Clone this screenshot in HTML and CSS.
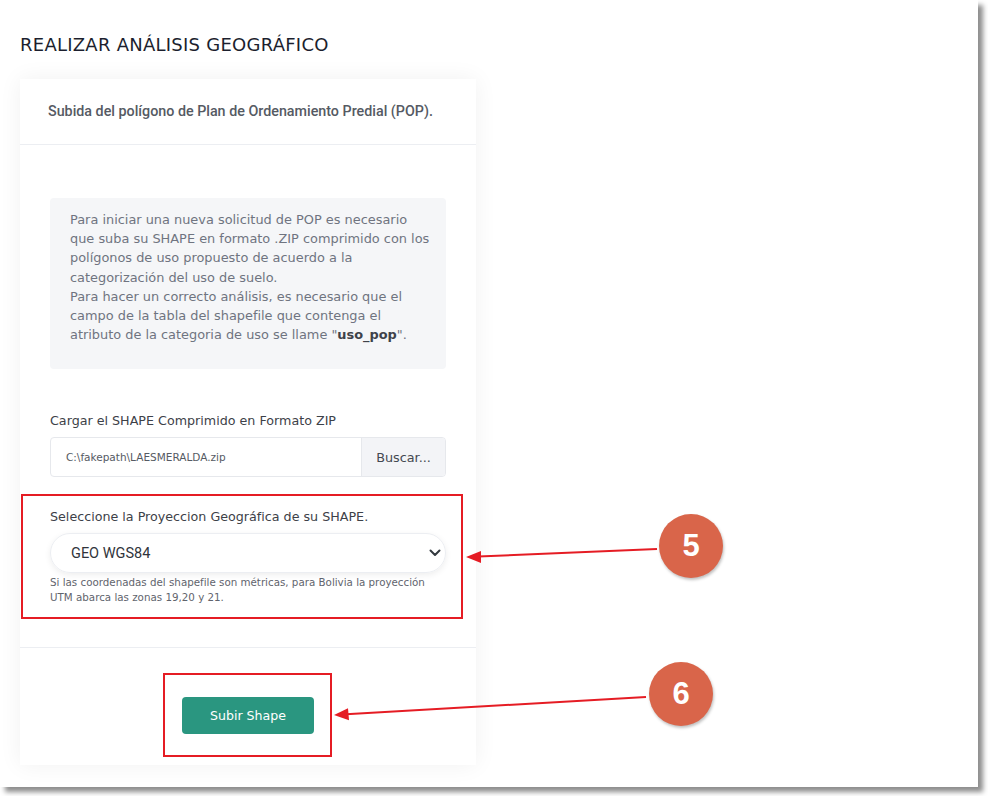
FILE: index.html
```html
<!DOCTYPE html>
<html lang="es">
  <head>
    <meta charset="UTF-8" />
    <meta name="viewport" content="width=device-width, initial-scale=1.0" />
    <title>Realizar análisis geográfico</title>
    <link rel="stylesheet" href="styles.css">
  </head>
  <body>
    <div class="sheet">
      <h2 class="pageTitle">REALIZAR ANÁLISIS GEOGRÁFICO</h2>

      <div class="card">
        <div class="cardHead">Subida del polígono de Plan de Ordenamiento Predial (POP).</div>

        <div class="cardBody">
          <div class="note">
            Para iniciar una nueva solicitud de POP es necesario<br>
            que suba su SHAPE en formato .ZIP comprimido con los<br>
            polígonos de uso propuesto de acuerdo a la<br>
            categorización del uso de suelo.<br>
            Para hacer un correcto análisis, es necesario que el<br>
            campo de la tabla del shapefile que contenga el<br>
            atributo de la categoria de uso se llame "<b>uso_pop</b>".
          </div>

          <div class="field fileField">
            <label class="fieldLabel">Cargar el SHAPE Comprimido en Formato ZIP</label>
            <div class="fileGroup">
              <span class="fileName">C:\fakepath\LAESMERALDA.zip</span>
              <span class="fileBtn">Buscar...</span>
            </div>
          </div>

          <div class="field selectField">
            <label class="fieldLabel">Seleccione la Proyeccion Geográfica de su SHAPE.</label>
            <div class="selectBox">
              <span>GEO WGS84</span>
              <svg width="12" height="8" viewBox="0 0 12 8"><path d="M1.5 1.5 L6 6 L10.5 1.5" fill="none" stroke="#343a40" stroke-width="2" stroke-linecap="round" stroke-linejoin="round"/></svg>
            </div>
            <small class="help">Si las coordenadas del shapefile son métricas, para Bolivia la proyección<br>UTM abarca las zonas 19,20 y 21.</small>
          </div>
        </div>

        <div class="cardFoot">
          <button class="btnSubmit">Subir Shape</button>
        </div>
      </div>

      <!-- annotation layer -->
      <div class="mark markSelect"></div>
      <div class="mark markButton"></div>
      <svg class="arrows" width="978" height="787">
        <line x1="657" y1="549" x2="478" y2="556.5" stroke="#e51c24" stroke-width="2"/>
        <polygon points="466,557 481,551 481,563" fill="#e51c24"/>
        <line x1="646" y1="697" x2="346" y2="714.3" stroke="#e51c24" stroke-width="2"/>
        <polygon points="334,715 348,708.3 349,720.3" fill="#e51c24"/>
      </svg>
      <div class="step step5">5</div>
      <div class="step step6">6</div>
    </div>
  </body>
</html>
```

FILE: styles.css
```css
* {
  margin: 0;
  padding: 0;
  box-sizing: border-box;
}
body {
  background: #fff;
  min-height: 796px;
  font-family: "DejaVu Sans", sans-serif;
}
.sheet {
  position: relative;
  width: 978px;
  height: 787px;
  background: #fff;
  padding: 34px 0 0 20px;
  box-shadow: 5px 5px 5px rgba(0, 0, 0, 0.45);
}
.pageTitle {
  font-family: "DejaVu Sans", sans-serif;
  font-weight: 400;
  font-size: 18px;
  line-height: 22px;
  color: #1c1f2e;
  letter-spacing: 0.25px;
  margin-bottom: 23px;
}
.card {
  width: 456px;
  height: 686px;
  background: #fff;
  box-shadow: 0 0 22px rgba(0, 0, 0, 0.06);
  display: flex;
  flex-direction: column;
}
.cardHead {
  font-family: Roboto, sans-serif;
  font-weight: 500;
  font-size: 14.3px;
  line-height: 21px;
  color: #555a63;
  padding: 22px 28px;
  border-bottom: 1px solid #eceef2;
}
.cardBody {
  padding: 53px 30px 0;
  flex: 0 0 503px;
  border-bottom: 1px solid #eceef2;
}
.note {
  background: #f5f6f8;
  border-radius: 4px;
  height: 171px;
  padding: 12px 10px 0 20px;
  font-size: 12.9px;
  line-height: 19.2px;
  color: #6f7480;
  white-space: nowrap;
}
.note b {
  color: #3e424a;
  font-weight: 600;
}
.field {
  display: flex;
  flex-direction: column;
}
.fieldLabel {
  font-size: 12.7px;
  line-height: 20px;
  color: #3d4148;
}
.fileField {
  margin-top: 42px;
  gap: 6px;
}
.fileGroup {
  display: flex;
  height: 40px;
  border: 1px solid #e6e8ec;
  border-radius: 4px;
  overflow: hidden;
}
.fileName {
  flex: 1;
  display: flex;
  align-items: center;
  padding-left: 15px;
  font-size: 10.5px;
  color: #555a63;
}
.fileBtn {
  width: 84px;
  display: flex;
  align-items: center;
  justify-content: center;
  background: #f3f4f7;
  border-left: 1px solid #e6e8ec;
  font-size: 12.8px;
  color: #444851;
}
.selectField {
  margin-top: 30px;
}
.selectBox {
  margin-top: 6px;
  height: 40px;
  border: 1px solid #eceef2;
  border-radius: 20px;
  box-shadow: 0 2px 6px rgba(0, 0, 0, 0.07);
  display: flex;
  align-items: center;
  justify-content: space-between;
  padding: 0 4px 0 20px;
  font-family: Roboto, sans-serif;
  font-size: 14.5px;
  color: #30343b;
}
.help {
  margin-top: 2px;
  font-size: 10.3px;
  line-height: 15px;
  color: #5f646d;
  white-space: nowrap;
}
.cardFoot {
  flex: 1;
  display: flex;
  justify-content: center;
  padding-top: 49px;
}
.btnSubmit {
  width: 132px;
  height: 37px;
  background: #2a9680;
  border: none;
  border-radius: 4px;
  color: #fff;
  font-family: "DejaVu Sans", sans-serif;
  font-size: 12.6px;
}

/* annotations */
.mark {
  position: absolute;
  border: 2px solid #e51c24;
}
.markSelect {
  left: 21px;
  top: 494px;
  width: 442px;
  height: 125px;
}
.markButton {
  left: 163px;
  top: 673px;
  width: 169px;
  height: 84px;
}
.arrows {
  position: absolute;
  left: 0;
  top: 0;
}
.step {
  position: absolute;
  width: 64px;
  height: 64px;
  border-radius: 50%;
  background: #d9654a;
  color: #fff;
  font-family: "Liberation Sans", Arial, sans-serif;
  font-weight: 700;
  font-size: 31px;
  display: flex;
  align-items: center;
  justify-content: center;
  box-shadow: 1px 2px 3px rgba(0, 0, 0, 0.25);
}
.step5 {
  left: 659px;
  top: 514px;
}
.step6 {
  left: 649px;
  top: 662px;
}
```
